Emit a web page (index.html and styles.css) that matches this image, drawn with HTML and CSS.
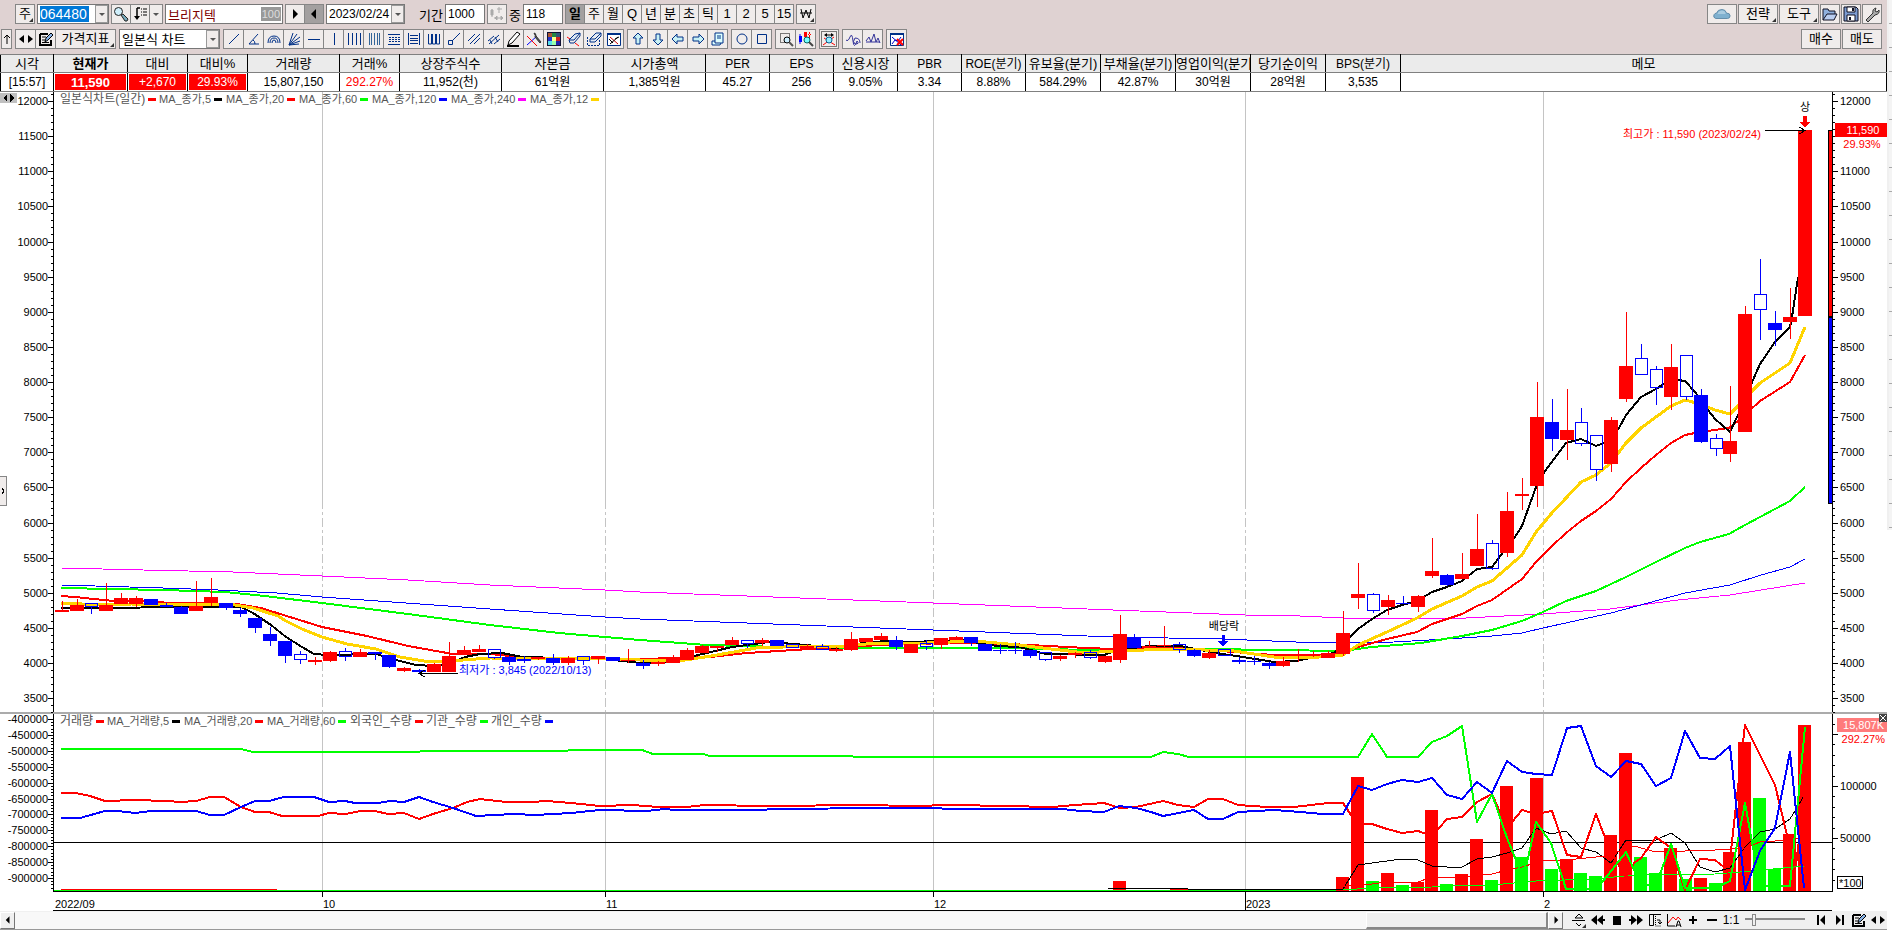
FILE: index.html
```html
<!DOCTYPE html>
<html lang="ko">
<head>
  <meta charset="UTF-8">
  <title>브리지텍 064480 - 일본식 차트</title>
  <meta name="viewport" content="width=device-width, initial-scale=1.0">
  <link rel="stylesheet" href="styles.css">
</head>
<body>

  <!-- icon set -->
  <svg class="sprite" aria-hidden="true">
    <symbol id="i-search" viewBox="0 0 16 16"><circle cx="5.5" cy="5.5" r="4" fill="#cfeefa" stroke="#222"/><path d="M8 9l2-1 5 5-1 2-2 0z" fill="#7ab" stroke="#222"/></symbol>
    <symbol id="i-sort" viewBox="0 0 16 16"><path d="M5 2h3M5 2v10" stroke="#000" stroke-width="1.5" fill="none"/><path d="M2 10h6l-3 4z" fill="#000"/><path d="M9 3h1m1 0h4M9 6h1m1 0h4M9 9h1m1 0h4" stroke="#000"/></symbol>
    <symbol id="i-down" viewBox="0 0 8 16"><path d="M1 7h6L4 10z" fill="#555"/></symbol>
    <symbol id="i-play" viewBox="0 0 16 16"><path d="M6 3l5 5-5 5z" fill="#000"/></symbol>
    <symbol id="i-back" viewBox="0 0 16 16"><path d="M10 3L5 8l5 5z" fill="#000"/></symbol>
    <symbol id="i-move" viewBox="0 0 16 16"><g fill="#aaa" stroke="#aaa"><path d="M3 3v8M10 1v6M13 3h-5M5 12h9" fill="none"/><path d="M2 4h2v5H2zM6 12l2-2v4zM14 12l-2-2v4z"/></g></symbol>
    <symbol id="i-won" viewBox="0 0 16 16"><path d="M3 3l2 9 3-8 3 8 2-9M2 7h12" fill="none" stroke="#000"/><path d="M16 12v4h-4z" fill="#333"/></symbol>
    <symbol id="i-cloud" viewBox="0 0 20 16"><path d="M3 13q-3-1-2-4 1-2 3-2 1-4 6-4 4 0 5 4 4 0 4 3t-3 3z" fill="#7fb0cf" stroke="#5b87a5"/><path d="M5 8q1-4 5-4 4 0 4 4z" fill="#a9cbe0"/></symbol>
    <symbol id="i-open" viewBox="0 0 16 16"><path d="M1 14V3h5l1 2h6v3" fill="#8fb0dd" stroke="#112"/><path d="M1 14l4-6h10l-3 6z" fill="#b9cdf0" stroke="#112"/></symbol>
    <symbol id="i-save" viewBox="0 0 16 16"><path d="M1 1h12l2 2v12H1z" fill="#7c9bd0" stroke="#112"/><path d="M4 1h8v5H4zM4 9h8v6H4z" fill="#fff" stroke="#112"/><path d="M9 2h2v3H9zM6 11h2v3H6z" fill="#112"/></symbol>
    <symbol id="i-wrench" viewBox="0 0 16 16"><path d="M2 14l7-7q-1-4 3-5l-1 3 2 1 2-2q1 4-4 5l-7 7z" fill="#aaa" stroke="#333"/></symbol>
    <symbol id="i-up" viewBox="0 0 8 16"><path d="M4 13V4M1 7l3-3 3 3" fill="none" stroke="#000"/></symbol>
    <symbol id="i-lr" viewBox="0 0 16 16"><path d="M1 8l5-4v8zM15 8l-5-4v8z" fill="#000"/><path d="M5 8h1M10 8h1" stroke="#000" stroke-width="2"/></symbol>
    <symbol id="i-note" viewBox="0 0 16 16"><path d="M2 3h8M2 3v11h11V9" fill="none" stroke="#000" stroke-width="2"/><path d="M4 6h4M4 9h3M4 11.500h7" stroke="#000"/><path d="M7 11l1-4 5-5 2 2-5 5z" fill="#8ab4e8" stroke="#000"/></symbol>
    <symbol id="i-line" viewBox="0 0 16 16"><path d="M3 13L13 3" stroke="#003087"/></symbol>
    <symbol id="i-angle" viewBox="0 0 16 16"><path d="M13 13H3L12 3M7 9q2 1 2 4" fill="none" stroke="#003087"/></symbol>
    <symbol id="i-arc" viewBox="0 0 16 16"><path d="M2 12q0-7 6-7t6 7M4 12q0-5 4-5t4 5M6 12q0-3 2-3t2 3" fill="none" stroke="#003087"/></symbol>
    <symbol id="i-fan" viewBox="0 0 16 16"><path d="M3 14L7 2M3 14L11 3M3 14l11-8M3 14l11-4M3 14l10-1" stroke="#003087"/></symbol>
    <symbol id="i-hline" viewBox="0 0 16 16"><path d="M2 8.500h12" stroke="#003087"/></symbol>
    <symbol id="i-vline" viewBox="0 0 16 16"><path d="M8.500 2v12" stroke="#003087"/></symbol>
    <symbol id="i-cols" viewBox="0 0 16 16"><path d="M2.500 2v12M6.500 2v12M10.500 2v12M14.500 2v12" stroke="#003087"/></symbol>
    <symbol id="i-cols2" viewBox="0 0 16 16"><path d="M3.500 2v12M5.500 2v12M8.500 2v12M11.500 2v12M13.500 2v12" stroke="#369"/></symbol>
    <symbol id="i-rows" viewBox="0 0 16 16"><path d="M2 3.500h12M2 13.500h12" stroke="#003087"/><path d="M3 6.500h11M3 8.500h11M3 10.500h11" stroke="#003087" stroke-dasharray="2 1"/></symbol>
    <symbol id="i-rows2" viewBox="0 0 16 16"><path d="M2.500 2v12M13.500 2v12M4 4.500h8M4 7.500h8M4 9.500h8M4 12.500h8" stroke="#003087"/></symbol>
    <symbol id="i-cyc" viewBox="0 0 16 16"><path d="M2.500 3v10h3V3M6.500 3v10h3V3M10.500 3v10h3V3" fill="none" stroke="#003087"/></symbol>
    <symbol id="i-node" viewBox="0 0 16 16"><path d="M6 10l8-8M2.500 9.500h4v4h-4z" fill="none" stroke="#003087"/></symbol>
    <symbol id="i-par" viewBox="0 0 16 16"><path d="M2 10l7-7M4 13l10-10M8 13l6-6" stroke="#003087"/></symbol>
    <symbol id="i-par2" viewBox="0 0 16 16"><path d="M2 10l6-5M3 13l10-9M8 13l6-5M4 9l2 4M9 6l3 5" stroke="#003087"/></symbol>
    <symbol id="i-pen" viewBox="0 0 16 16"><path d="M2 14l1-4 8-9 3 2-8 9z" fill="#fff" stroke="#000"/><path d="M1 15h12" stroke="#000" stroke-width="2"/></symbol>
    <symbol id="i-tool" viewBox="0 0 16 16"><path d="M1 14L11 5" stroke="#00f"/><path d="M1 5l10 10" stroke="#f00"/><path d="M8 2q2 3 1 4l5 6 1-1-5-6q0-3-2-3" fill="#555" stroke="#333"/></symbol>
    <symbol id="i-color" viewBox="0 0 16 16"><path d="M1 1h14v14H1z" fill="#113"/><path d="M2 2h4v4H2z" fill="#a53"/><path d="M6 2h4v4H6z" fill="#284"/><path d="M10 2h4v4h-4z" fill="#357"/><path d="M2 6h4v4H2z" fill="#23c"/><path d="M6 6h4v4H6z" fill="#ff8"/><path d="M10 6h4v4h-4z" fill="#c22"/><path d="M2 10h4v4H2z" fill="#5de"/><path d="M6 10h4v4H6z" fill="#9fa"/><path d="M10 10h4v4h-4z" fill="#22a"/></symbol>
    <symbol id="i-erase" viewBox="0 0 16 16"><path d="M3 9l6-6 5-1-6 7z" fill="#dfe9f5" stroke="#003087"/><path d="M3 9l1 3h4l6-7V2" fill="none" stroke="#003087"/><path d="M1 6l3 2M9 12l4 3" stroke="#f00"/></symbol>
    <symbol id="i-erase2" viewBox="0 0 16 16"><path d="M4 8l6-6h5L9 8zM4 8v3h5l6-6V2" fill="#dfe9f5" stroke="#003087"/><path d="M1.500 6v8.500h12V8" fill="none" stroke="#003087" stroke-dasharray="2 1"/></symbol>
    <symbol id="i-close" viewBox="0 0 16 16"><path d="M1.500 2.500h13v12h-13z" fill="#fff" stroke="#003087"/><path d="M1 2h14v2H1z" fill="#003087"/><path d="M4 6l8 7" stroke="#c00"/><path d="M12 6l-8 7M3 8l4 4M9 8l4-2" stroke="#000"/></symbol>
    <symbol id="i-arrow" viewBox="0 0 16 16"><path d="M8 2l5 5h-3v6H6V7H3z" fill="#c8f0f4" stroke="#003087"/></symbol>
    <symbol id="i-memo" viewBox="0 0 16 16"><path d="M5 2h8v10H5zM5 10H2v4h8l1-2M7 5h4M7 7h4" fill="#dff" stroke="#003087"/></symbol>
    <symbol id="i-circle" viewBox="0 0 16 16"><circle cx="8" cy="8" r="5" fill="none" stroke="#003087"/></symbol>
    <symbol id="i-square" viewBox="0 0 16 16"><path d="M3.500 3.500h9v9h-9z" fill="none" stroke="#003087"/></symbol>
    <symbol id="i-zoom" viewBox="0 0 16 16"><path d="M2.500 2.500h9v9h-9z" fill="none" stroke="#000" stroke-dasharray="1 1"/><circle cx="9" cy="9" r="3" fill="#cef" stroke="#000"/><path d="M11 11l4 4" stroke="#555" stroke-width="2"/></symbol>
    <symbol id="i-zoomc" viewBox="0 0 16 16"><path d="M2 3v10" stroke="#00f"/><path d="M1 5h3v6H1z" fill="#00f"/><path d="M6 1h3v5H6zM11 1h1v6h-1zM13 3h-3v1h3z" fill="#f00"/><circle cx="9" cy="9" r="3" fill="#7ff" stroke="#066"/><path d="M11 11l4 4" stroke="#444" stroke-width="2"/></symbol>
    <symbol id="i-zoomx" viewBox="0 0 16 16"><path d="M.5.5h15v15H.5z" fill="none" stroke="#000" stroke-dasharray="1 1"/><path d="M3 4l3-2v4zM13 4l-3-2v4z" fill="#000"/><path d="M5 4h6" stroke="#000"/><path d="M2 14L13 6M3 7l11 7" stroke="#f00"/><circle cx="8" cy="9" r="3" fill="#9ef" stroke="#069"/></symbol>
    <symbol id="i-wave" viewBox="0 0 16 16"><path d="M1 9q2 2 4-3t3 4 4 0q3 3-2 3-3-2 0-6 5 0 5 5" fill="none" stroke="#339"/></symbol>
    <symbol id="i-wave2" viewBox="0 0 16 16"><path d="M1 10l3-4 2 5 3-8 2 8 2-4 2 5M1 11h14" fill="none" stroke="#339"/></symbol>
    <symbol id="i-del" viewBox="0 0 16 16"><path d="M1.500 2.500h13v12h-13z" fill="#fff" stroke="#003087"/><path d="M1 2h14v2H1z" fill="#003087"/><path d="M3 6l9 8M3 13l3-4 3 1 3-4" fill="none" stroke="#00c"/><path d="M8 14l6-6M8 8l6 6" stroke="#f00" stroke-width="2"/></symbol>
    <symbol id="i-rew" viewBox="0 0 16 16"><path d="M7 3v10L1 8zM13 3v10L7 8z" fill="#000"/><path d="M12 7h3v2h-3z" fill="#000"/></symbol>
    <symbol id="i-ff" viewBox="0 0 16 16"><path d="M9 3v10l6-5zM3 3v10l6-5z" fill="#000"/><path d="M1 7h3v2H1z" fill="#000"/></symbol>
    <symbol id="i-stop" viewBox="0 0 16 16"><path d="M4 4h8v9H4z" fill="#000"/></symbol>
    <symbol id="i-tri" viewBox="0 0 16 16"><path d="M4 6l4-4 4 4zM1 8.500h13M5 11l3 3 2-2" fill="none" stroke="#000"/><path d="M15 12v4h-4z" fill="#333"/></symbol>
    <symbol id="i-grid" viewBox="0 0 16 16"><path d="M2.500 2.500h4v11h-4zM6 2.500h8" fill="none" stroke="#000"/><path d="M8.500 4v10h5" fill="none" stroke="#000" stroke-dasharray="1 1"/><path d="M10 8h3v4l2-2M13 12l-2-2" fill="none" stroke="#000"/></symbol>
    <symbol id="i-cha" viewBox="0 0 16 16"><path d="M1.500 2v12H9" fill="none" stroke="#000"/><path d="M2 11l5-6 3 3 2-3 3 3" fill="none" stroke="#f00"/><path d="M10 15l2-6h1l2 6M11 13h3" fill="none" stroke="#000"/></symbol>
    <symbol id="i-plus" viewBox="0 0 16 16"><path d="M4 8h8M8 4v8" stroke="#000" stroke-width="2"/></symbol>
    <symbol id="i-minus" viewBox="0 0 16 16"><path d="M3 8h10" stroke="#000" stroke-width="2"/></symbol>
    <symbol id="i-first" viewBox="0 0 16 16"><path d="M4 3h2v10H4zM12 3v10L7 8z" fill="#000"/></symbol>
    <symbol id="i-last" viewBox="0 0 16 16"><path d="M10 3h2v10h-2zM4 3v10l5-5z" fill="#000"/></symbol>
  </svg>

  <div class="app">
    <main class="main">

      <div class="toolbar row1">
        <button class="btn menu">주</button>
        <div class="combo code">
          <input type="text" class="selected" value="064480" aria-label="종목코드">
          <button class="drop" aria-label="종목 목록"><svg><use href="#i-down"/></svg></button>
        </div>
        <div class="group">
          <button class="btn" aria-label="검색"><svg><use href="#i-search"/></svg></button>
          <button class="btn" aria-label="정렬"><svg><use href="#i-sort"/></svg></button>
          <button class="btn narrow" aria-label="더보기"><svg><use href="#i-down"/></svg></button>
        </div>
        <div class="combo name">
          <input type="text" value="브리지텍" aria-label="종목명">
          <span class="badge">100</span>
        </div>
        <div class="group">
          <button class="btn" aria-label="다음"><svg><use href="#i-play"/></svg></button>
          <button class="btn dark" aria-label="이전"><svg><use href="#i-back"/></svg></button>
        </div>
        <div class="combo date">
          <input type="text" value="2023/02/24" aria-label="날짜">
          <button class="drop" aria-label="달력"><svg><use href="#i-down"/></svg></button>
        </div>
        <label class="lbl-period" for="period">기간</label>
        <input class="box" id="period" type="text" value="1000">
        <button class="btn" aria-label="이동"><svg><use href="#i-move"/></svg></button>
        <label class="lbl" for="count">중</label>
        <input class="box" id="count" type="text" value="118">
        <div class="group periods">
          <button class="btn on">일</button>
          <button class="btn">주</button>
          <button class="btn">월</button>
          <button class="btn">Q</button>
          <button class="btn">년</button>
          <button class="btn">분</button>
          <button class="btn">초</button>
          <button class="btn">틱</button>
          <button class="btn">1</button>
          <button class="btn">2</button>
          <button class="btn">5</button>
          <button class="btn">15</button>
        </div>
        <button class="btn" aria-label="원"><svg><use href="#i-won"/></svg></button>
        <div class="right">
          <button class="btn cloud" aria-label="클라우드"><svg><use href="#i-cloud"/></svg></button>
          <button class="btn wide menu">전략</button>
          <button class="btn wide menu">도구</button>
          <button class="btn" aria-label="열기"><svg><use href="#i-open"/></svg></button>
          <button class="btn" aria-label="저장"><svg><use href="#i-save"/></svg></button>
          <button class="btn" aria-label="설정"><svg><use href="#i-wrench"/></svg></button>
        </div>
      </div>

      <div class="toolbar row2">
        <button class="btn slim" aria-label="위로"><svg><use href="#i-up"/></svg></button>
        <div class="group tools">
          <button class="btn" aria-label="좌우"><svg><use href="#i-lr"/></svg></button>
          <button class="btn" aria-label="메모"><svg><use href="#i-note"/></svg></button>
          <button class="btn price menu">가격지표</button>
        </div>
        <div class="combo type">
          <select aria-label="차트 종류"><option>일본식 차트</option></select>
          <span class="drop"><svg><use href="#i-down"/></svg></span>
        </div>
        <div class="group tools">
          <button class="btn" aria-label="추세선"><svg><use href="#i-line"/></svg></button>
          <button class="btn" aria-label="각도선"><svg><use href="#i-angle"/></svg></button>
          <button class="btn" aria-label="원호"><svg><use href="#i-arc"/></svg></button>
          <button class="btn" aria-label="팬"><svg><use href="#i-fan"/></svg></button>
          <button class="btn" aria-label="수평선"><svg><use href="#i-hline"/></svg></button>
          <button class="btn" aria-label="수직선"><svg><use href="#i-vline"/></svg></button>
          <button class="btn" aria-label="시간대"><svg><use href="#i-cols"/></svg></button>
          <button class="btn" aria-label="피보나치 시간대"><svg><use href="#i-cols2"/></svg></button>
          <button class="btn" aria-label="되돌림"><svg><use href="#i-rows"/></svg></button>
          <button class="btn" aria-label="등분선"><svg><use href="#i-rows2"/></svg></button>
          <button class="btn" aria-label="사이클"><svg><use href="#i-cyc"/></svg></button>
          <button class="btn" aria-label="연결선"><svg><use href="#i-node"/></svg></button>
          <button class="btn" aria-label="평행선"><svg><use href="#i-par"/></svg></button>
          <button class="btn" aria-label="채널"><svg><use href="#i-par2"/></svg></button>
          <button class="btn" aria-label="펜"><svg><use href="#i-pen"/></svg></button>
          <button class="btn" aria-label="선 설정"><svg><use href="#i-tool"/></svg></button>
          <button class="btn" aria-label="색상"><svg><use href="#i-color"/></svg></button>
          <button class="btn" aria-label="지우기"><svg><use href="#i-erase"/></svg></button>
          <button class="btn" aria-label="영역 지우기"><svg><use href="#i-erase2"/></svg></button>
          <button class="btn" aria-label="모두 지우기"><svg><use href="#i-close"/></svg></button>
        </div>
        <div class="group tools">
          <button class="btn" aria-label="위 화살표"><svg><use href="#i-arrow"/></svg></button>
          <button class="btn" aria-label="아래 화살표"><svg class="r180"><use href="#i-arrow"/></svg></button>
          <button class="btn" aria-label="왼쪽 화살표"><svg class="r270"><use href="#i-arrow"/></svg></button>
          <button class="btn" aria-label="오른쪽 화살표"><svg class="r90"><use href="#i-arrow"/></svg></button>
          <button class="btn" aria-label="글쓰기"><svg><use href="#i-memo"/></svg></button>
        </div>
        <div class="group tools">
          <button class="btn" aria-label="원형"><svg><use href="#i-circle"/></svg></button>
          <button class="btn" aria-label="사각형"><svg><use href="#i-square"/></svg></button>
        </div>
        <div class="group tools">
          <button class="btn" aria-label="영역 확대"><svg><use href="#i-zoom"/></svg></button>
          <button class="btn" aria-label="봉 확대"><svg><use href="#i-zoomc"/></svg></button>
        </div>
        <button class="btn" aria-label="전체 보기"><svg><use href="#i-zoomx"/></svg></button>
        <div class="group tools">
          <button class="btn" aria-label="파동"><svg><use href="#i-wave"/></svg></button>
          <button class="btn" aria-label="파동 2"><svg><use href="#i-wave2"/></svg></button>
        </div>
        <div class="group tools">
          <button class="btn" aria-label="지표 삭제"><svg><use href="#i-del"/></svg></button>
        </div>
        <div class="right">
          <button class="btn wide">매수</button>
          <button class="btn wide">매도</button>
        </div>
      </div>

      <table class="quote">
        <colgroup>
          <col class="w53"><col class="w74"><col class="w60"><col class="w60"><col class="w92"><col class="w60">
          <col class="w102"><col class="w102"><col class="w102">
          <col class="w64"><col class="w64"><col class="w64"><col class="w64"><col class="w64">
          <col class="w75"><col class="w75"><col class="w75"><col class="w75"><col class="w75"><col>
        </colgroup>
        <thead>
          <tr>
            <th>시각</th><th class="bold">현재가</th><th>대비</th><th>대비%</th><th>거래량</th><th>거래%</th>
            <th>상장주식수</th><th>자본금</th><th>시가총액</th><th class="en">PER</th><th class="en">EPS</th><th>신용시장</th><th class="en">PBR</th>
            <th class="en">ROE(분기)</th><th>유보율(분기)</th><th>부채율(분기)</th><th>영업이익(분기)</th><th>당기순이익</th><th class="en">BPS(분기)</th><th>메모</th>
          </tr>
        </thead>
        <tbody>
          <tr>
            <td>[15:57]</td><td class="up bold">11,590</td><td class="up">+2,670</td><td class="up">29.93%</td><td>15,807,150</td><td class="red">292.27%</td>
            <td>11,952(천)</td><td>61억원</td><td>1,385억원</td><td>45.27</td><td>256</td><td>9.05%</td><td>3.34</td>
            <td>8.88%</td><td>584.29%</td><td>42.87%</td><td>30억원</td><td>28억원</td><td>3,535</td><td></td>
          </tr>
        </tbody>
      </table>

      <svg class="chart" id="chart" viewBox="0 92 1887 819" role="img" aria-label="브리지텍 일간 차트"></svg>

      <div class="bottom">
        <button class="sb" aria-label="왼쪽으로"><svg><use href="#i-back"/></svg></button>
        <div class="track"><div class="thumb"></div></div>
        <button class="sb" aria-label="오른쪽으로"><svg><use href="#i-play"/></svg></button>
        <div class="ctrl">
          <button aria-label="간격"><svg><use href="#i-tri"/></svg></button>
          <button aria-label="뒤로"><svg><use href="#i-rew"/></svg></button>
          <button aria-label="정지"><svg><use href="#i-stop"/></svg></button>
          <button aria-label="앞으로"><svg><use href="#i-ff"/></svg></button>
          <button aria-label="격자"><svg><use href="#i-grid"/></svg></button>
          <button aria-label="자동"><svg><use href="#i-cha"/></svg></button>
          <button aria-label="확대"><svg><use href="#i-plus"/></svg></button>
          <button aria-label="축소"><svg><use href="#i-minus"/></svg></button>
          <button>1:1</button>
        </div>
        <input type="range" class="zoom" min="0" max="100" value="12" aria-label="확대 비율">
        <div class="ctrl last">
          <button aria-label="처음"><svg><use href="#i-first"/></svg></button>
          <button aria-label="마지막"><svg><use href="#i-last"/></svg></button>
          <button aria-label="메모"><svg><use href="#i-note"/></svg></button>
          <button aria-label="좌우"><svg><use href="#i-lr"/></svg></button>
        </div>
      </div>
    </main>
    <aside class="edge"></aside>
  </div>

  <script src="chart.js"></script>
</body>
</html>
```
FILE: styles.css
```css
* {
  box-sizing: border-box;
}

body {
  margin: 0;
  background: #fff;
  color: #000;
  font-family: "Liberation Sans", "Noto Sans CJK KR", sans-serif;
  font-size: 13px;
}

button, input, select {
  font: inherit;
  color: inherit;
  margin: 0;
  padding: 0;
}

.sprite {
  position: absolute;
  width: 0;
  height: 0;
}

.app {
  display: flex;
}

.main {
  flex: 1;
  min-width: 0;
}

.edge {
  width: 5px;
  background: repeating-linear-gradient(#f4f4f4 0 23px, #aaa 23px 24px);
  border-left: 2px solid #f0f0f0;
  height: 530px;
}

/* toolbars */

.toolbar {
  display: flex;
  align-items: center;
  background: #dfd2d2;
}

.row1 {
  gap: 2px;
  padding: 4px 5px 0 15px;
}

.row2 {
  gap: 3px;
  padding: 5px 5px 5px 1px;
}

.group {
  display: flex;
}

.group .btn + .btn {
  margin-left: -1px;
}

.right {
  display: flex;
  gap: 1px;
  margin-left: auto;
}

.btn {
  position: relative;
  flex: none;
  display: flex;
  align-items: center;
  justify-content: center;
  width: 20px;
  height: 20px;
  background: #f0eceb;
  border: 1px solid #868686;
  line-height: 18px;
}

.btn svg {
  width: 16px;
  height: 16px;
}

.tools .btn {
  width: 21px;
}

.btn.narrow {
  width: 14px;
}

.btn.narrow svg, .btn.slim svg {
  width: 8px;
}

.btn.slim {
  width: 11px;
}

.btn.wide {
  width: 40px;
}

.btn.cloud {
  width: 30px;
}

.btn.cloud svg {
  width: 18px;
}

.tools .btn.price {
  width: 61px;
}

.btn.dark, .btn.on {
  background: #a3a0a0;
}

.btn.on {
  font-weight: bold;
}

.menu::after {
  content: "";
  position: absolute;
  right: 1px;
  bottom: 1px;
  border-left: 4px solid transparent;
  border-bottom: 4px solid #333;
}

.r90 { transform: rotate(90deg); }
.r180 { transform: rotate(180deg); }
.r270 { transform: rotate(270deg); }

.combo {
  display: flex;
  align-items: center;
  height: 20px;
  padding-left: 2px;
  background: #fff;
  border: 1px solid #777;
}

.combo input, .combo select {
  flex: 1;
  min-width: 0;
  height: 16px;
  border: 0;
  background: none;
  outline: 0;
  appearance: none;
}

.combo .drop {
  display: flex;
  align-items: center;
  justify-content: center;
  width: 13px;
  height: 18px;
  background: #f0eceb;
  border: 1px solid #999;
}

.drop svg {
  width: 8px;
  height: 16px;
}

.code { width: 72px; }
.name { width: 118px; color: #800000; }
.date { width: 79px; font-size: 12px; }
.type { width: 101px; }

.combo .selected {
  flex: none;
  width: 49px;
  margin-right: auto;
  background: #0078d7;
  color: #fff;
  font-size: 14px;
}

.badge {
  padding: 0 1px;
  margin-right: 1px;
  background: #999;
  color: #ddd;
  font-size: 11px;
  line-height: 14px;
}

.box {
  width: 40px;
  height: 20px;
  padding-left: 2px;
  border: 1px solid #777;
  background: #fff;
  font-size: 12px;
}

.lbl-period {
  width: 36px;
  text-align: right;
}

.lbl {
  width: 12px;
}

/* quote table */

.quote {
  width: 100%;
  table-layout: fixed;
  border-collapse: collapse;
}

.quote th, .quote td {
  height: 19px;
  padding: 0;
  border: 1px solid #000;
  border-top-color: #808080;
  border-bottom-color: #808080;
  text-align: center;
  font-weight: normal;
  line-height: 16px;
  white-space: nowrap;
  overflow: hidden;
}

.quote th {
  height: 18px;
  background: #ebebeb;
}

.quote .en {
  font-size: 12px;
}

.quote td {
  font-size: 12px;
  line-height: 17px;
}

.quote .up {
  background: #f00;
  color: #fff;
  box-shadow: inset 0 0 0 1px #fff;
}

.quote .red {
  color: #f00;
}

.quote .bold {
  font-weight: bold;
}

.quote td.bold {
  font-size: 13px;
}

.w53 { width: 53px; }
.w60 { width: 60px; }
.w64 { width: 64px; }
.w74 { width: 74px; }
.w75 { width: 75px; }
.w92 { width: 92px; }
.w102 { width: 102px; }

/* chart */

.chart {
  display: block;
  width: 100%;
  height: auto;
  background: #fff;
  shape-rendering: crispEdges;
  font-size: 11px;
}

.chart .kr {
  font-size: 12px;
}

.chart .legend {
  fill: #555;
}

/* bottom bar */

.bottom {
  display: flex;
  align-items: center;
  height: 19px;
  background: #f0f0f0;
  border-bottom: 1px solid #999;
}

.sb {
  display: flex;
  align-items: center;
  justify-content: center;
  width: 15px;
  height: 17px;
  background: #f0f0f0;
  border: 1px solid #fff;
  border-right-color: #777;
  border-bottom-color: #777;
}

.sb svg {
  flex: none;
  width: 12px;
  height: 12px;
}

.track {
  flex: 1;
  display: flex;
  justify-content: flex-end;
  background: #f8f8f8;
}

.thumb {
  width: 182px;
  height: 17px;
  background: #f0f0f0;
  border: 1px solid #fff;
  border-right: 2px solid #888;
  border-bottom: 2px solid #888;
}

.ctrl {
  display: flex;
  gap: 3px;
  padding-left: 8px;
}

.ctrl button {
  display: flex;
  align-items: center;
  justify-content: center;
  width: 16px;
  height: 16px;
  border: 0;
  background: none;
  font-size: 12px;
}

.ctrl svg {
  flex: none;
  width: 16px;
  height: 16px;
}

.ctrl.last {
  padding-right: 1px;
}

.zoom {
  appearance: none;
  width: 60px;
  height: 12px;
  margin-left: 6px;
  background: linear-gradient(#f0f0f0 4px, #888 4px 6px, #f0f0f0 6px);
}

.zoom::-webkit-slider-thumb {
  appearance: none;
  width: 4px;
  height: 12px;
  background: #f0f0f0;
  border: 1px solid #888;
}
```
FILE: chart.js
```js
const svg = document.getElementById('chart');
const NS = 'http://www.w3.org/2000/svg';
const RED = '#ff0000', BLUE = '#0000ff', GREEN = '#00ff00', GOLD = '#ffd400';
const LEFT = 53, RIGHT = 1832, BASE = 891;

function add(tag, attrs, text) {
  const el = document.createElementNS(NS, tag);
  for (const k in attrs) el.setAttribute(k, attrs[k]);
  if (text !== undefined) el.textContent = text;
  svg.appendChild(el);
  return el;
}

function rect(x, y, width, height, fill, more) {
  return add('rect', { x, y, width, height, fill, ...more });
}

function label(x, y, text, more) {
  return add('text', { x, y, ...more }, text);
}

function line(points, stroke, width) {
  add('polyline', { points, fill: 'none', stroke, 'stroke-width': width, 'stroke-linejoin': 'round' });
}

const xAt = i => Math.round(61.6 + 14.9 * i);

// [kind, high, top, bottom, low]  r = up, b = down, h = down (hollow)
const candles = [
  ['r',601,610,612,612],['r',599,605,611,611],['h',603,603,606,614],['r',583,605,611,611],['r',593,598,604,604],
  ['r',596,598,604,607],['b',599,599,605,605],['h',603,605,606,606],['b',606,607,614,614],['r',581,606,611,611],
  ['r',578,597,603,606],['b',603,603,608,610],['b',608,610,614,617],['b',618,618,628,633],['b',627,634,641,646],
  ['b',641,641,656,663],['h',651,654,659,664],['r',657,660,662,665],['r',651,652,661,662],['h',648,651,656,661],
  ['r',649,652,657,657],['b',652,652,654,660],['b',655,655,667,668],['r',667,668,671,672],['b',669,670,672,674],
  ['r',663,664,672,672],['r',642,656,672,672],['r',646,650,655,655],['r',645,649,652,652],['h',649,649,657,659],
  ['b',656,657,662,665],['b',656,659,661,663],['r',657,657,659,660],['b',654,658,663,665],['r',656,658,663,665],
  ['h',656,656,660,665],['r',656,656,659,664],['b',657,657,661,661],['r',649,660,661,663],['b',660,663,666,669],
  ['r',661,662,664,666],['r',655,658,663,663],['r',648,650,660,660],['r',645,646,653,653],['r',646,646,648,652],
  ['r',637,640,645,645],['h',640,640,643,648],['r',638,640,643,646],['b',640,640,646,646],['h',644,644,647,648],
  ['r',644,646,649,650],['h',644,646,649,649],['r',647,649,651,652],['r',632,639,650,651],['r',638,638,642,642],
  ['r',633,636,640,640],['b',636,640,647,650],['r',644,644,653,653],['h',640,643,646,650],['r',638,638,645,649],
  ['r',636,637,640,640],['b',637,637,643,646],['b',644,644,651,651],['b',644,650,651,654],['b',642,650,651,654],
  ['b',650,650,656,658],['h',652,652,659,661],['r',655,656,659,661],['r',652,653,655,658],['h',650,652,657,659],
  ['r',656,656,662,663],['r',615,634,660,663],['b',634,638,648,648],['r',641,646,648,648],['r',626,645,646,648],
  ['h',642,644,649,653],['b',649,650,656,657],['r',650,653,658,659],['h',649,649,655,656],['b',657,660,662,664],
  ['b',656,661,662,665],['b',662,663,666,669],['r',657,661,666,667],['r',649,655,656,662],['r',651,654,656,657],
  ['r',651,653,658,658],['r',611,633,654,656],['r',563,594,598,609],['h',593,594,610,613],['r',595,600,607,615],
  ['b',596,603,604,604],['r',595,596,607,612],['r',538,571,576,578],['b',574,575,585,586],['r',553,574,579,579],
  ['r',514,549,566,566],['h',540,543,568,570],['r',492,511,553,557],['r',478,494,496,510],['r',382,417,486,507],
  ['b',399,422,439,451],['r',389,430,440,460],['h',408,422,443,446],['h',435,435,469,481],['r',417,420,464,472],
  ['r',312,366,399,402],['h',344,358,374,375],['h',366,369,387,405],['r',344,367,397,410],['h',355,355,396,400],
  ['b',389,395,442,443],['h',434,438,448,456],['r',386,441,454,462],['r',306,314,432,432],['h',259,294,309,340],
  ['b',311,323,330,346],['r',288,317,322,339],['r',130,130,316,316]
];

// volume bar tops, from candle 86
const volumes = [
  ['r',877],['r',777],['g',881],['r',873],['g',885],['r',882],['r',810],['g',884],['r',874],['r',839],['g',880],
  ['r',786],['g',857],['r',778],['g',869],['r',859],['g',873],['g',876],['r',835],['r',753],['g',857],['g',873],
  ['r',848],['g',879],['r',878],['g',883],['r',852],['r',742],['g',798],['g',869],['r',834],['r',725]
];

const ma240 = '61,568 143,570 233,572 322,576 408,580 490,585 605,590 640,592 933,603 1113,610 1245,615 1300,616 1343,618 1466,618 1543,614 1610,609 1678,600 1730,595 1805,583';
const ma120 = '61,585 163,588 218,590 277,593 322,597 490,609 605,617 640,619 933,630 1113,637 1223,639 1320,643 1394,642 1447,639 1492,636 1522,633 1543,628 1611,613 1685,593 1730,585 1761,575 1790,567 1805,559';
const ma60 = '61,588 163,590 225,592 265,596 322,603 408,614 490,625 559,633 605,637 640,640 707,645 818,648 933,648 1015,648 1086,650 1207,649 1274,650 1343,651 1372,647 1421,643 1462,636 1492,630 1522,621 1543,612 1566,601 1596,591 1626,577 1656,562 1685,548 1700,542 1729,534 1745,525 1790,501 1805,487';
const ma20 = '61,596 75,597 94,599 114,601 143,601 171,603 237,604 261,608 322,627 367,636 408,646 453,654 490,654 531,658 605,659 640,659 711,657 747,653 810,649 881,645 948,643 1010,644 1086,648 1113,649 1176,647 1220,651 1274,655 1327,655 1343,652 1358,647 1387,639 1417,632 1432,624 1462,614 1477,606 1492,600 1522,579 1536,562 1551,547 1566,533 1581,521 1596,511 1611,499 1626,482 1641,468 1656,455 1671,443 1685,435 1700,432 1729,428 1738,421 1760,401 1790,382 1805,355';
const ma12 = '61,603 102,605 131,604 184,605 229,604 253,608 278,616 286,621 302,629 322,637 347,644 376,649 400,657 424,661 449,661 490,658 605,659 640,660 685,660 711,656 734,652 756,648 783,647 845,646 877,643 926,643 975,641 1019,645 1051,649 1086,653 1113,651 1176,649 1234,651 1274,657 1319,657 1343,655 1358,645 1387,632 1417,618 1432,609 1462,596 1477,587 1492,581 1507,568 1522,555 1536,532 1551,514 1566,498 1581,482 1596,475 1611,463 1626,443 1641,428 1656,417 1671,406 1685,400 1700,404 1715,410 1730,414 1738,406 1753,390 1760,383 1790,363 1805,327';
const ma5 = '61,608 98,608 184,607 241,607 253,613 271,625 286,637 302,647 314,654 327,655 376,654 400,661 416,665 433,666 445,665 465,657 480,654 502,653 522,657 605,659 640,663 667,662 694,656 732,647 769,642 806,645 836,648 863,643 886,641 912,642 961,640 997,646 1019,647 1046,654 1104,655 1118,650 1149,646 1180,646 1216,653 1243,657 1274,662 1296,661 1334,653 1349,638 1358,629 1372,619 1387,610 1402,605 1417,601 1432,592 1447,587 1462,581 1477,569 1492,567 1507,547 1515,537 1522,526 1536,487 1543,474 1551,463 1566,443 1581,439 1596,446 1604,443 1611,438 1619,428 1626,415 1641,397 1656,389 1671,379 1685,381 1695,392 1708,410 1715,419 1730,432 1738,415 1753,380 1760,364 1775,342 1790,327 1792,317 1797,284 1803,255';

const foreign = '61,749 241,749 253,752 419,752 421,751 567,751 569,750 642,750 653,754 703,754 710,756 852,756 854,757 1151,757 1163,752 1178,754 1189,757 1358,757 1372,734 1387,757 1418,757 1432,742 1447,736 1462,726 1477,822 1492,794 1507,838 1522,875 1528,858 1536,822 1551,843 1566,889 1596,889 1604,880 1626,852 1641,885 1656,885 1671,844 1685,888 1715,888 1730,881 1745,803 1760,886 1790,886 1805,727';
const inst = '61,793 76,793 90,796 105,801 135,800 167,801 180,802 196,801 210,797 224,797 241,807 255,812 269,812 282,816 318,816 329,813 345,814 361,811 375,811 388,814 404,813 419,819 433,814 453,808 467,802 480,799 506,802 531,802 547,801 571,803 600,806 633,805 658,807 687,807 705,805 767,806 866,805 910,806 955,805 1004,806 1053,807 1075,805 1104,803 1120,808 1136,807 1163,801 1178,805 1194,807 1208,799 1223,799 1238,805 1267,807 1294,807 1328,803 1343,803 1351,815 1358,824 1372,824 1387,829 1402,833 1418,831 1432,836 1447,819 1462,817 1477,802 1492,794 1507,828 1522,810 1536,814 1552,811 1567,855 1581,857 1596,814 1611,853 1626,877 1634,863 1641,858 1656,837 1671,848 1685,890 1700,859 1715,860 1725,868 1730,860 1745,725 1775,785 1787,835 1796,865 1805,790';
const indiv = '61,818 80,818 105,811 118,811 135,813 151,811 196,811 210,815 224,815 241,807 255,801 269,801 284,797 314,797 329,802 345,801 355,803 378,803 390,801 404,802 419,797 433,802 453,808 476,816 514,814 535,815 571,813 600,810 647,811 665,809 674,810 763,810 772,809 888,808 937,808 946,809 1062,809 1080,811 1104,812 1119,806 1136,808 1151,812 1163,816 1194,810 1208,819 1223,819 1238,812 1274,810 1300,812 1323,814 1343,814 1358,786 1372,790 1387,784 1402,780 1418,782 1432,778 1447,795 1462,799 1477,782 1492,793 1507,761 1522,772 1536,774 1552,775 1567,728 1581,726 1596,766 1611,777 1626,761 1641,764 1656,786 1671,778 1685,731 1700,758 1715,759 1730,746 1745,890 1760,851 1775,828 1790,752 1804,888';
const vma5 = '1108,889 1115,888 1186,888 1190,890 1343,889 1358,865 1372,863 1387,861 1402,859 1418,860 1432,866 1447,867 1462,867 1477,859 1492,857 1507,853 1522,848 1536,828 1551,834 1566,831 1581,848 1596,852 1611,863 1626,840 1656,840 1671,833 1685,843 1700,867 1715,872 1730,868 1745,847 1760,832 1775,829 1790,819 1804,796';
const vma20 = '1343,887 1358,884 1372,884 1387,882 1418,882 1432,877 1462,877 1492,874 1507,870 1522,867 1545,860 1566,860 1596,857 1606,856 1634,846 1656,852 1715,850 1745,848 1760,842 1790,840 1804,837';
const vma60 = '1343,890 1372,888 1432,887 1462,885 1492,885 1536,881 1594,879 1634,875 1715,874 1753,871 1804,866';

// month grid
const months = [[322,'10'],[605,'11'],[933,'12'],[1245,'2023'],[1543,'2']];
months.forEach(([x]) => {
  rect(x, 92, 1, 408, '#c4c4c4');
  add('line', { x1: x + 0.5, x2: x + 0.5, y1: 500, y2: 712, stroke: '#c4c4c4', 'stroke-dasharray': '9 3 3 3' });
  rect(x, 714, 1, 177, '#c4c4c4');
});

// price pane
line(ma240, '#ff00ff', 1);
line(ma120, BLUE, 1);
line(ma60, GREEN, 2);
line(ma20, RED, 2);
line(ma5, '#000', 2);
line(ma12, GOLD, 3);

candles.forEach(([kind, high, top, bottom, low], i) => {
  const x = xAt(i);
  const color = kind === 'r' ? RED : BLUE;
  if (kind === 'h') {
    rect(x, high, 1, top - high, color);
    rect(x, bottom, 1, low - bottom, color);
    rect(x - 5.5, top + 0.5, 12, bottom - top, 'none', { stroke: color });
  } else {
    rect(x, high, 1, low - high, color);
    rect(x - 7, top, 14, bottom - top, color);
  }
});

// volume pane
rect(LEFT, 842, RIGHT - LEFT, 1, '#000');
rect(1113, 881, 13, 10, RED);
rect(61, 889, 216, 1, RED);
rect(54, 890, 1290, 1, GREEN);
rect(1170, 889, 173, 1, RED);
volumes.forEach(([kind, top], i) => rect(xAt(86 + i) - 7, top, 13, BASE - top, kind === 'r' ? RED : GREEN));
line(vma5, '#000', 1);
line(vma20, RED, 1);
line(vma60, GREEN, 1);
line(inst, RED, 2);
line(foreign, GREEN, 2);
line(indiv, BLUE, 2);

// frame
rect(0, 712, 1887, 2, '#ababab');
rect(LEFT, 92, 1, 620, '#000');
rect(RIGHT, 92, 1, 620, '#000');
rect(LEFT, 714, 1, 178, '#000');
rect(RIGHT, 714, 1, 178, '#000');
rect(LEFT, BASE, RIGHT - LEFT, 1, '#000');
rect(LEFT, 910, RIGHT - LEFT, 1, '#000');

// price scale
for (let p = 12100; p >= 3300; p -= 100) {
  const y = Math.round(101 + (12000 - p) * 0.07025);
  const major = p % 500 === 0;
  const len = major ? 5 : 2;
  rect(LEFT - len, y, len, 1, '#000');
  rect(RIGHT + 1, y, len, 1, '#000');
  if (major) {
    label(48, y + 4, p, { 'text-anchor': 'end' });
    if (p !== 11500) label(1840, y + 4, p);
  }
}

// volume scales
for (let k = 0; k <= 53; k++) {
  const y = Math.round(719 + k * 3.18);
  const len = k % 5 === 0 ? 5 : 2;
  rect(LEFT - len, y, len, 1, '#000');
  if (k % 5 === 0) label(48, y + 4, -400000 - k * 10000, { 'text-anchor': 'end' });
}
for (let k = 1; k <= 16; k++) {
  const y = Math.round(890 - k * 10.4);
  rect(RIGHT + 1, y, k % 5 === 0 ? 5 : 2, 1, '#000');
}
label(1840, 790, '100000');
label(1840, 842, '50000');

// dates
label(55, 908, '2022/09');
months.forEach(([x, text]) => {
  rect(x, BASE, 1, text === '2023' ? 19 : 6, '#000');
  label(x + 1, 908, text);
});

// today's range bar
rect(1828, 130, 4, 374, '#000');
rect(1829, 131, 3, 185, RED);
rect(1829, 318, 3, 185, BLUE);

// tags
rect(1835, 123, 52, 14, RED);
label(1863, 134, '11,590', { fill: '#fff', 'text-anchor': 'middle' });
label(1862, 148, '29.93%', { fill: RED, 'text-anchor': 'middle' });
rect(1837, 718, 50, 14, '#ff7b7b');
label(1884, 729, '15,807K', { fill: '#fff', 'text-anchor': 'end' });
label(1885, 743, '292.27%', { fill: RED, 'text-anchor': 'end' });
rect(1879, 714, 8, 8, '#444');
add('path', { d: 'M1880 715l6 6M1886 715l-6 6', stroke: '#fff' });
rect(1837.5, 876.5, 25, 12, '#fff', { stroke: '#000' });
label(1839, 887, '*100');

// notes
label(1623, 138, '최고가 : 11,590 (2023/02/24)', { fill: RED });
add('path', { d: 'M1765 130.5h40M1799 127l6 3.500-6 3.500', fill: 'none', stroke: '#000' });
label(1805, 111, '상', { 'text-anchor': 'middle' });
add('path', { d: 'M1803 116h4v6h3l-5 6-5-6h3z', fill: RED });
label(459, 674, '최저가 : 3,845 (2022/10/13)', { fill: BLUE });
add('path', { d: 'M458 673.5h-39M425 670l-6 3.500 6 3.500', fill: 'none', stroke: '#000' });
label(1224, 630, '배당락', { 'text-anchor': 'middle' });
add('path', { d: 'M1222 635h3v6h3l-5 6-5-6h4z', fill: BLUE });

function legend(x, y, items) {
  items.forEach(([text, color]) => {
    const kr = !text.startsWith('MA');
    const el = label(x, y, text, { class: kr ? 'legend kr' : 'legend' });
    x = Math.round(x + el.getComputedTextLength()) + 3;
    rect(x, y - 5, 8, 3, color, { rx: 1 });
    x += kr ? 11 : 12;
  });
}
legend(60, 103, [['일본식차트(일간)', RED], ['MA_종가,5', '#000'], ['MA_종가,20', RED], ['MA_종가,60', GREEN], ['MA_종가,120', BLUE], ['MA_종가,240', '#ff00ff'], ['MA_종가,12', GOLD]]);
legend(60, 725, [['거래량', RED], ['MA_거래량,5', '#000'], ['MA_거래량,20', RED], ['MA_거래량,60', GREEN], ['외국인_수량', RED], ['기관_수량', GREEN], ['개인_수량', BLUE]]);

// side handles
rect(0, 93, 17, 10, '#c0c0c0');
add('path', { d: 'M7 94v8l-4-4zM10 94v8l4-4z', fill: '#000' });
rect(-0.5, 476.5, 7, 29, '#f0eceb', { stroke: '#868686' });
add('path', { d: 'M2 488l2 3-2 3', fill: 'none', stroke: '#000' });
```
